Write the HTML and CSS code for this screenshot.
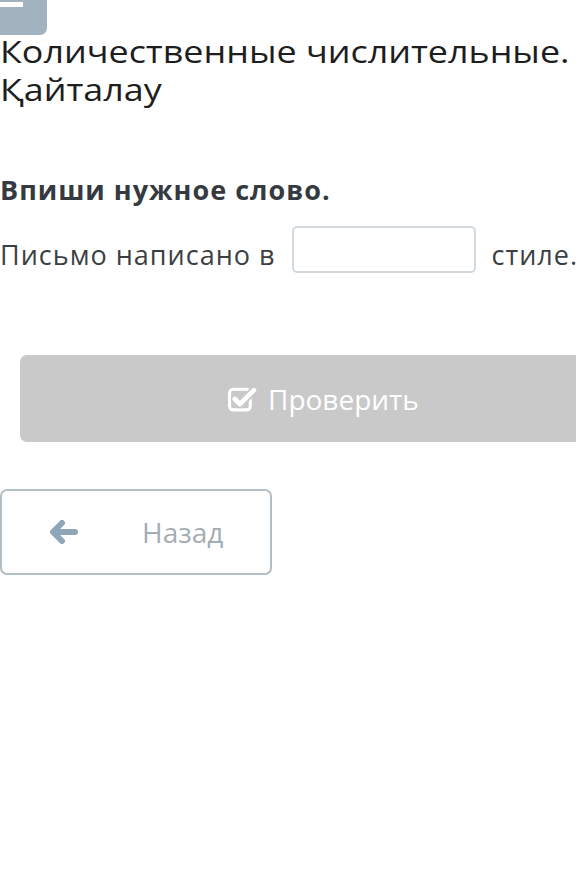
FILE: index.html
```html
<!DOCTYPE html>
<html lang="ru">
<head>
<meta charset="utf-8">
<link rel="stylesheet" href="styles.css">
</head>
<body>
<div class="page">
  <div class="menu-tab"><span class="menu-bar"></span></div>
  <h1 class="title">Количественные числительные. Қайталау</h1>
  <h2 class="task">Впиши нужное слово.</h2>
  <div class="sentence">
    <span>Письмо написано в</span>
    <input class="answer" type="text">
    <span>стиле.</span>
  </div>
  <div class="check-wrap">
    <button class="check-btn">
      <svg class="check-icon" viewBox="0 0 28 26" width="29" height="27">
        <rect x="1.5" y="4" width="20" height="20" rx="3.5" fill="none" stroke="#fff" stroke-width="3"/>
        <path d="M6.5 13.5 L11.5 18.5 L26 4" fill="none" stroke="#c9c9c9" stroke-width="8" stroke-linecap="round" stroke-linejoin="round"/>
        <path d="M6.5 13.5 L11.5 18.5 L25 5" fill="none" stroke="#fff" stroke-width="4.5" stroke-linecap="round" stroke-linejoin="round"/>
      </svg>
      <span>Проверить</span>
    </button>
  </div>
  <button class="back-btn">
    <svg class="back-icon" viewBox="0 0 28 24" width="28" height="24">
      <path d="M12 3 L3 12 L12 21" fill="none" stroke="#8fa6b8" stroke-width="6" stroke-linecap="round" stroke-linejoin="round"/>
      <path d="M5 12 H25" fill="none" stroke="#8fa6b8" stroke-width="6" stroke-linecap="round"/>
    </svg>
    <span class="back-text">Назад</span>
  </button>
</div>
</body>
</html>
```
FILE: styles.css
```css
html, body {
  margin: 0;
  padding: 0;
  background: #fff;
  overflow: hidden;
}
.page {
  font-family: "Open Sans", "Noto Sans", sans-serif;
  width: 576px;
  height: 894px;
  overflow: hidden;
}
.menu-tab {
  width: 47px;
  height: 35px;
  background: #a2b2bf;
  border-radius: 0 0 7px 0;
  position: relative;
}
.menu-bar {
  position: absolute;
  left: 0;
  top: 2px;
  width: 23px;
  height: 5px;
  background: #fff;
}
.title {
  margin: -3px 0 0 0;
  font-weight: 400;
  font-size: 31px;
  line-height: 38px;
  color: #1e1e1e;
  width: 505px;
  transform: scaleX(1.157);
  transform-origin: 0 0;
}
.task {
  margin: 64px 0 0 0;
  font-size: 27px;
  line-height: 36px;
  font-weight: 700;
  letter-spacing: 1px;
  color: #343a40;
}
.sentence {
  margin-top: 18px;
  display: flex;
  align-items: flex-end;
  gap: 16px;
  font-size: 27px;
  letter-spacing: 1px;
  color: #3c3f42;
  white-space: nowrap;
}
.answer {
  width: 180px;
  height: 43px;
  border: 2px solid #d3dadf;
  border-radius: 5px;
  box-sizing: content-box;
  padding: 0;
  margin: 0;
  outline: none;
  flex: none;
}
.check-wrap {
  margin-top: 82px;
  padding-left: 20px;
}
.check-btn {
  width: 580px;
  height: 87px;
  border: none;
  border-radius: 7px;
  background: #c9c9c9;
  color: #fff;
  font-family: "Open Sans", "Noto Sans", sans-serif;
  font-size: 28px;
  display: flex;
  align-items: center;
  justify-content: flex-start;
  padding: 0 0 0 208px;
  gap: 11px;
}
.check-icon {
  display: block;
}
.back-btn {
  margin-top: 47px;
  width: 272px;
  height: 86px;
  border: 2px solid #b4bec6;
  border-radius: 7px;
  background: #fff;
  display: flex;
  align-items: center;
  padding: 0 0 0 48px;
  box-sizing: border-box;
  font-family: "Open Sans", "Noto Sans", sans-serif;
  font-size: 28px;
  color: #a3adb5;
}
.back-text {
  margin-left: 64px;
}
```
